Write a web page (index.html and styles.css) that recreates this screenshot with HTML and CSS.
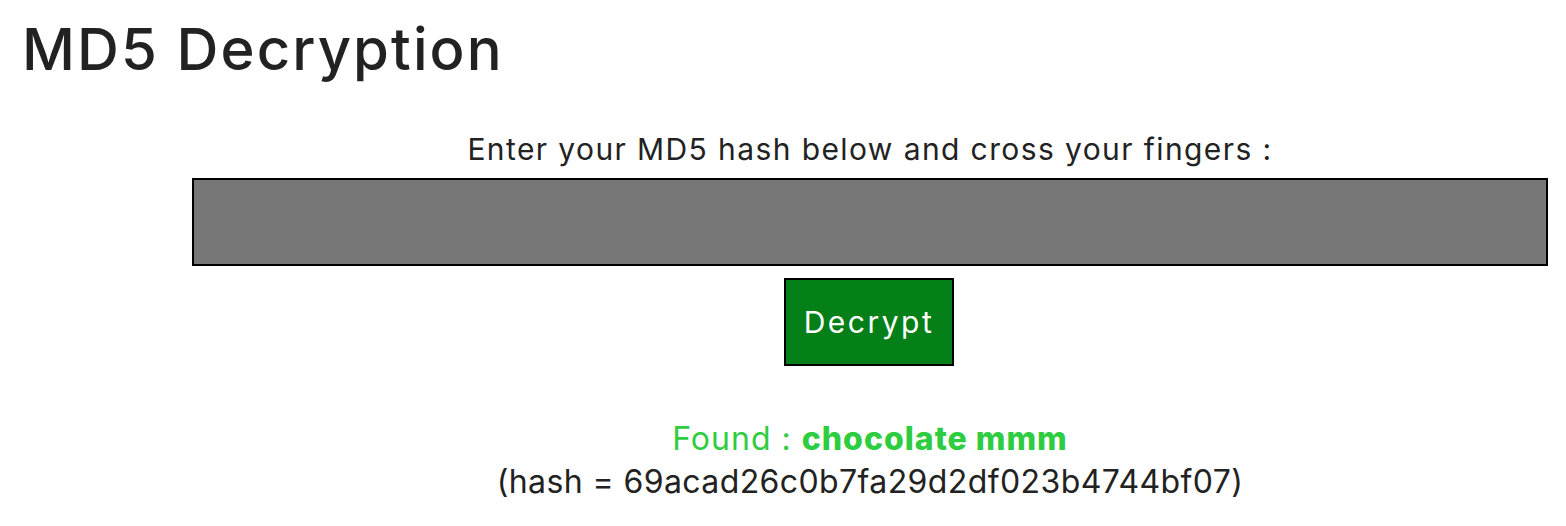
FILE: index.html
```html
<!DOCTYPE html>
<html>
<head>
<meta charset="utf-8">
<link rel="stylesheet" href="styles.css">
</head>
<body>
<h1 class="title">MD5 Decryption</h1>
<form class="tool">
  <label class="prompt" for="hash">Enter your MD5 hash below and cross your fingers :</label>
  <input class="hash-input" id="hash" type="text">
  <button class="decrypt" type="button">Decrypt</button>
  <div class="result">
    <div class="found">Found : <strong>chocolate mmm</strong></div>
    <div class="hash-line">(hash = 69acad26c0b7fa29d2df023b4744bf07)</div>
  </div>
</form>
</body>
</html>
```
FILE: styles.css
```css
html, body {
  margin: 0;
  padding: 0;
  background: #fff;
}
body {
  font-family: "Inter", "Noto Sans", sans-serif;
  color: #222;
  padding: 0 18px 0 21px;
}
.title {
  margin: 0;
  padding-top: 14px;
  padding-left: 1px;
  font-size: 58px;
  font-weight: 500;
  line-height: 70px;
  letter-spacing: 2.1px;
  color: #222;
}
.tool {
  margin: 45px 0 0 171px;
  width: 1356px;
  display: flex;
  flex-direction: column;
  align-items: center;
}
.prompt {
  font-size: 30px;
  line-height: 40px;
  letter-spacing: 1.4px;
  color: #222;
}
.hash-input {
  margin-top: 9px;
  width: 1356px;
  height: 88px;
  box-sizing: border-box;
  border: 2px solid #000;
  background: #777777;
  outline: none;
}
.decrypt {
  margin-top: 12px;
  margin-right: 2px;
  width: 170px;
  height: 88px;
  box-sizing: border-box;
  border: 2px solid #000;
  background: #057f17;
  color: #fff;
  font-family: inherit;
  font-size: 30px;
  letter-spacing: 2.5px;
  padding: 0;
}
.result {
  margin-top: 51px;
  text-align: center;
  font-size: 32px;
  line-height: 43px;
}
.found {
  color: #2ecc40;
  letter-spacing: 1px;
}
.found strong {
  font-weight: 800;
}
.hash-line {
  color: #222;
  letter-spacing: 0.4px;
}
```
